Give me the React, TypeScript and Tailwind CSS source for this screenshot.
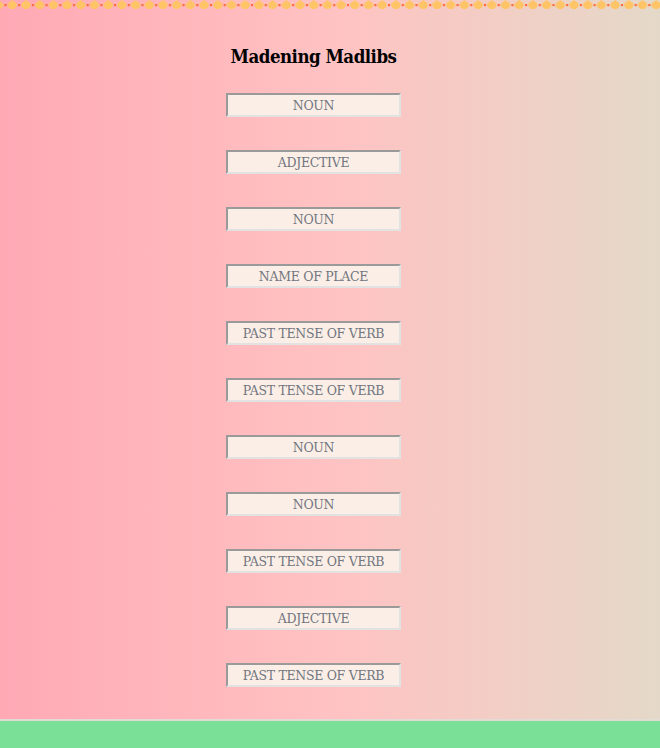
import React from 'react';

const fields = [
  'NOUN',
  'ADJECTIVE',
  'NOUN',
  'NAME OF PLACE',
  'PAST TENSE OF VERB',
  'PAST TENSE OF VERB',
  'NOUN',
  'NOUN',
  'PAST TENSE OF VERB',
  'ADJECTIVE',
  'PAST TENSE OF VERB',
];

function DotBorder() {
  return (
    <svg className="absolute top-0 left-0 w-full h-[10px]" aria-hidden="true">
      <defs>
        <pattern id="dots" x="-1.4" y="0" width="13.7" height="10" patternUnits="userSpaceOnUse">
          <path d="M13.7 0 L18.2 3.6 A4.6 4.6 0 1 1 9.2 3.6 Z" fill="#ffc466" />
          <path d="M0 0 L4.5 3.6 A4.6 4.6 0 1 1 -4.5 3.6 Z" fill="#ffc466" />
          <rect x="5.8" y="4" width="2.2" height="2.2" fill="#ff6a3a" />
        </pattern>
      </defs>
      <rect width="100%" height="10" fill="url(#dots)" />
    </svg>
  );
}

export default function App() {
  return (
    <div className="min-h-[748px] flex flex-col" style={{ fontFamily: '"DejaVu Serif", serif' }}>
      <main className="relative h-[719px] bg-gradient-to-r from-[#ffa9b5] via-[#ffc2c2] to-[#e4d9c8] flex flex-col items-center pr-[33px]">
        <DotBorder />
        <h1
          className="mt-[45px] text-[18.5px] font-bold text-black tracking-[-0.5px] leading-[24px]"
          style={{ fontFamily: '"DejaVu Serif Condensed", "DejaVu Serif", serif', fontStretch: 'condensed' }}
        >
          Madening Madlibs
        </h1>
        <form className="mt-[24px] flex flex-col gap-[33px]">
          {fields.map((f, i) => (
            <input
              key={i}
              type="text"
              placeholder={f}
              className="w-[175px] h-[24px] pt-[1px] bg-[#fbeee6] border-2 border-t-[#9a9a9a] border-l-[#9a9a9a] border-b-[#e2e2e2] border-r-[#e2e2e2] text-center text-[12.5px] tracking-[-0.3px] placeholder:text-[#717680] outline-none"
            />
          ))}
        </form>
      </main>
      <div className="h-[2px] bg-[#e3dcd6]" />
      <footer className="flex-1 bg-[#7be097]" />
    </div>
  );
}
